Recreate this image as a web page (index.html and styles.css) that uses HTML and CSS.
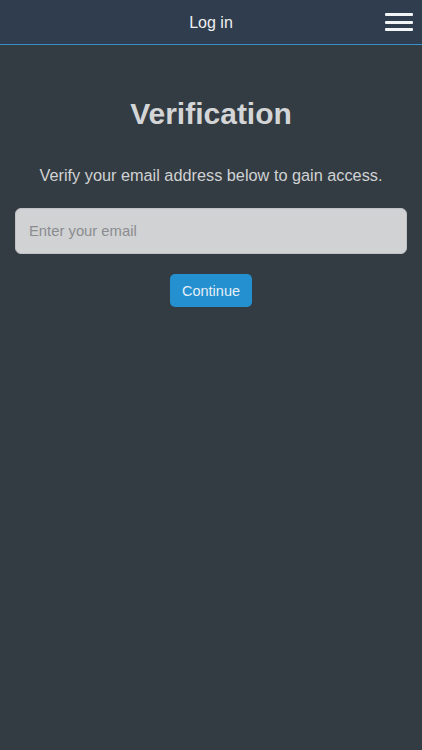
FILE: index.html
```html
<!DOCTYPE html>
<html lang="en">
<head>
    <meta charset="UTF-8">
    <meta name="viewport" content="width=device-width, initial-scale=1.0">
    <title>Log in</title>
    <link rel="stylesheet" href="styles.css">
</head>
<body>
    <header class="topbar">
        <span class="topbar-title">Log in</span>
        <button class="menu-btn" aria-label="Menu">
            <span></span>
            <span></span>
            <span></span>
        </button>
    </header>
    <main class="content">
        <h1 class="title">Verification</h1>
        <p class="subtitle">Verify your email address below to gain access.</p>
        <input type="email" class="email-input" placeholder="Enter your email">
        <button class="continue-btn">Continue</button>
    </main>
</body>
</html>
```

FILE: styles.css
```css
body {
    margin: 0;
    min-height: 100vh;
    font-family: "Liberation Sans", Arial, sans-serif;
    background-color: #343c43;
    color: #d2d4d6;
}

.topbar {
    position: relative;
    height: 44px;
    display: flex;
    justify-content: center;
    align-items: center;
    background-color: #2f3d4e;
    border-bottom: 1px solid #3790c9;
}

.topbar-title {
    padding-top: 2px;
    font-size: 16px;
    color: #eef0f2;
}

.menu-btn {
    position: absolute;
    right: 9px;
    top: 13px;
    width: 28px;
    padding: 0;
    border: none;
    background: none;
    display: flex;
    flex-direction: column;
    gap: 4.5px;
    cursor: pointer;
}

.menu-btn span {
    display: block;
    height: 3px;
    border-radius: 1px;
    background-color: #f2f4f6;
}

.content {
    display: flex;
    flex-direction: column;
    align-items: center;
    padding: 0 15px;
}

.title {
    margin: 51px 0 0 0;
    font-size: 30px;
    font-weight: bold;
    line-height: 36px;
    color: #d3d5d7;
}

.subtitle {
    margin: 33px 0 0 0;
    font-size: 16.3px;
    line-height: 20px;
    color: #d0d2d4;
}

.email-input {
    box-sizing: border-box;
    width: 100%;
    height: 46px;
    margin-top: 23px;
    padding: 0 13px;
    font-family: inherit;
    font-size: 14.8px;
    color: #333;
    background-color: #d1d2d4;
    border: 1px solid #bfc1c4;
    border-radius: 6px;
    outline: none;
}

.email-input::placeholder {
    color: #8a8c8f;
}

.continue-btn {
    margin-top: 20px;
    height: 33px;
    padding: 0 12px;
    font-family: inherit;
    font-size: 14.5px;
    color: #e4eef6;
    background-color: #2490cf;
    border: none;
    border-radius: 5px;
    cursor: pointer;
}
```
